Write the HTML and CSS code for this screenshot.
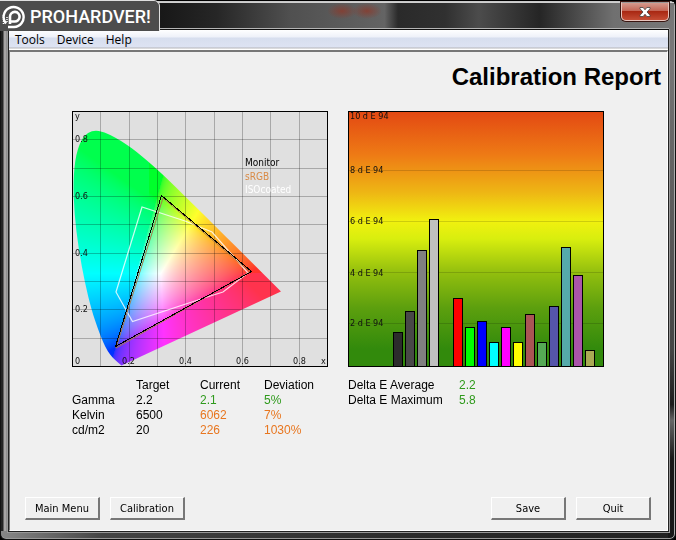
FILE: index.html
```html
<!DOCTYPE html>
<html lang="en">
<head>
<meta charset="utf-8">
<title>Calibration Report</title>
<link rel="stylesheet" href="styles.css">
</head>
<body>
<div class="window">
  <header class="titlebar">
    <button class="close" type="button" aria-label="Close">
      <svg width="12" height="10" viewBox="0 0 12 10"><path d="M1 .5h3.2L6 2.8 7.800.5H11v1.300L8 5l3 3.200v1.300H7.800L6 7.200 4.200 9.500H1V8.200L4 5 1 1.800z" fill="#fff" stroke="#444" stroke-width=".8"/></svg>
    </button>
  </header>
  <div class="client">
    <nav class="menu">
      <button type="button">Tools</button>
      <button type="button">Device</button>
      <button type="button">Help</button>
    </nav>
    <main class="content">
      <h1>Calibration Report</h1>
      <div class="panels">
        <section>
          <div class="chart">
            <canvas id="gamut" width="256" height="256"></canvas>
            <svg width="256" height="256" viewBox="0 0 256 256">
              <path class="grid" d="M28.500 0v256M57.500 0v256M85.500 0v256M113.500 0v256M142.500 0v256M170.500 0v256M198.500 0v256M227.500 0v256M0 28.500h256M0 57.500h256M0 85.500h256M0 113.500h256M0 142.500h256M0 170.500h256M0 198.500h256M0 227.500h256"/>
              <path d="M70 96L44 181L60.500 210.500L132 187L151 181L176 162L140 121L113 110Z" fill="none" stroke="#fff" stroke-opacity=".8" stroke-width="1.200"/>
              <path d="M91 87L178 161L44 237Z" fill="none" stroke="#a87a48"/>
              <path d="M89.500 84.500L179.500 160.500L43.500 235.500Z" fill="none" stroke="#000" shape-rendering="crispEdges"/>
              <g class="axis">
                <text x="3" y="8">y</text>
                <text x="3" y="31">0.8</text>
                <text x="3" y="88">0.6</text>
                <text x="3" y="145">0.4</text>
                <text x="3" y="201">0.2</text>
                <text x="3" y="253">0</text>
                <text x="50" y="253">0.2</text>
                <text x="107" y="253">0.4</text>
                <text x="164" y="253">0.6</text>
                <text x="221" y="253">0.8</text>
                <text x="249" y="253">x</text>
              </g>
              <g class="legend">
                <text x="173" y="55" fill="#000">Monitor</text>
                <text x="173" y="69" fill="#d98a45">sRGB</text>
                <text x="173" y="82" fill="#fff">ISOcoated</text>
              </g>
              <rect class="frame" x=".5" y=".5" width="255" height="255"/>
            </svg>
          </div>
          <table class="readings">
            <tr><td></td><th scope="col">Target</th><th scope="col">Current</th><th scope="col">Deviation</th></tr>
            <tr><th scope="row">Gamma</th><td>2.2</td><td class="good">2.1</td><td class="good">5%</td></tr>
            <tr><th scope="row">Kelvin</th><td>6500</td><td class="warn">6062</td><td class="warn">7%</td></tr>
            <tr><th scope="row">cd/m2</th><td>20</td><td class="warn">226</td><td class="warn">1030%</td></tr>
          </table>
        </section>
        <section>
          <div class="chart delta">
            <svg width="256" height="256" viewBox="0 0 256 256">
              <path class="grid faint" d="M0 59.500h256M0 110.500h256M0 161.500h256M0 212.500h256"/>
              <g class="axis">
                <text x="2" y="8">10 d E 94</text>
                <text x="2" y="62">8 d E 94</text>
                <text x="2" y="113">6 d E 94</text>
                <text x="2" y="165">4 d E 94</text>
                <text x="2" y="215">2 d E 94</text>
              </g>
              <g stroke="#000">
                <rect x="45.500" y="221.500" width="9" height="34" fill="#2c2c2c"/>
                <rect x="57.500" y="200.500" width="9" height="55" fill="#484848"/>
                <rect x="69.500" y="139.500" width="9" height="116" fill="#808080"/>
                <rect x="81.500" y="108.500" width="9" height="147" fill="#c0c0c0"/>
                <rect x="105.500" y="187.500" width="9" height="68" fill="#f00"/>
                <rect x="117.500" y="216.500" width="9" height="39" fill="#0f0"/>
                <rect x="129.500" y="210.500" width="9" height="45" fill="#00f"/>
                <rect x="141.500" y="231.500" width="9" height="24" fill="#0ff"/>
                <rect x="153.500" y="216.500" width="9" height="39" fill="#f0f"/>
                <rect x="165.500" y="231.500" width="9" height="24" fill="#ff0"/>
                <rect x="177.500" y="203.500" width="9" height="52" fill="#aa5555"/>
                <rect x="189.500" y="231.500" width="9" height="24" fill="#55aa55"/>
                <rect x="201.500" y="195.500" width="9" height="60" fill="#5555aa"/>
                <rect x="213.500" y="136.500" width="9" height="119" fill="#55aaaa"/>
                <rect x="225.500" y="164.500" width="9" height="91" fill="#aa55aa"/>
                <rect x="237.500" y="239.500" width="9" height="16" fill="#aaaa55"/>
              </g>
              <rect class="frame" x=".5" y=".5" width="255" height="255"/>
            </svg>
          </div>
          <table class="readings summary">
            <tr><th scope="row">Delta E Average</th><td class="good">2.2</td></tr>
            <tr><th scope="row">Delta E Maximum</th><td class="good">5.8</td></tr>
          </table>
        </section>
      </div>
      <footer class="actions">
        <button type="button">Main Menu</button>
        <button type="button">Calibration</button>
        <span class="spacer"></span>
        <button type="button">Save</button>
        <button type="button">Quit</button>
      </footer>
    </main>
  </div>
  <div class="brand">
    <svg width="24" height="24" viewBox="0 0 24 24" fill="none" stroke="#fff">
      <path d="M4 18.500A10 10 0 1 1 12 22H6" stroke-width="2.400"/>
      <path d="M8 19V11.500A4.800 4.800 0 1 1 12.500 16.500H9" stroke-width="2.600"/>
      <path d="M1.500 10v9M5 12v6" stroke-width="1.500" stroke-dasharray="1 1"/>
    </svg>
    <span>PROHARDVER!</span>
  </div>
</div>
<script src="gamut.js"></script>
</body>
</html>
```
FILE: styles.css
```css
* { box-sizing: border-box; }

body {
  margin: 0;
  background: #000;
  font-family: "Liberation Sans", Arial, sans-serif;
  font-size: 12px;
  color: #000;
}

button { font: inherit; color: inherit; }

.window {
  position: relative;
  display: flex;
  flex-direction: column;
  min-height: 100vh;
  padding: 1px 6px 7px 7px;
  background:
    linear-gradient(90deg, #222 0 2px, #a5a3a3 3px 5px, #777 6px, transparent 7px) 0 30px / 7px calc(100% - 38px) no-repeat,
    linear-gradient(180deg, #777 0, #777 60px, #6a6a6a 120px, #444 65%, #1c1c1c 75%, #666 78%, #181818 85%) 100% 0 / 7px 100% no-repeat,
    linear-gradient(90deg, #888, #444 15%, #2b2b2b 60%, #222);
  border: 1px solid #111;
  border-top-color: #000;
  border-radius: 0 6px 6px 6px;
  box-shadow: inset 0 1px #c8c8c8, inset -1px 0 #aaa, inset 0 -1px #999;
}

.titlebar {
  display: flex;
  justify-content: flex-end;
  height: 28px;
  margin: 0 -5px 0 -7px;
  padding-right: 5px;
  background:
    radial-gradient(ellipse 15px 8px, #8a3a2ccc, transparent) 327px 0 / 28px 18px no-repeat,
    radial-gradient(ellipse 15px 8px, #8a3a2ccc, transparent) 352px 0 / 28px 18px no-repeat,
    linear-gradient(90deg, #333 0, #181818 24%, #262626 32%, #505050 43%, #646464 57%, #2a2a2a 59%, #303030 66%, #4c4c4c 71%, #252525 80%, #707070 91%, #777);
  box-shadow: inset 0 1px #d0d0d0;
}

.close {
  display: grid;
  place-items: center;
  width: 48px;
  height: 19px;
  padding: 0;
  border: 1px solid #e8c4bc;
  border-top-color: #999;
  border-radius: 0 0 5px 5px;
  background: linear-gradient(#d59a8e, #c46656 45%, #a92813 50%, #c54d35);
  box-shadow: 0 0 0 1px #3a1510;
}

.client {
  flex: 1;
  display: flex;
  flex-direction: column;
  border: 1px solid #222;
  border-top: 0;
  box-shadow: 0 -1px #111, 0 -2px #b5b5b5, 0 0 0 1px #999;
  background: #f0f0f0;
}

.menu {
  display: flex;
  height: 20px;
  background: linear-gradient(#fff 0, #eef1f9 7px, #d7deee 8px, #dde3f3 17px, #b4b4b8 18px, #fff 19px);
  font-family: "Open Sans", "Segoe UI", sans-serif;
}

.menu button {
  padding: 0 6px;
  border: 0;
  background: none;
  line-height: 20px;
}

.content {
  flex: 1;
  display: flex;
  flex-direction: column;
  border: 1px solid #777;
  border-top: 2px solid #777;
  border-right-color: #fff;
  border-bottom-color: #fff;
}

h1 {
  margin: 11px 6px 20px;
  font-size: 24px;
  line-height: 28px;
  text-align: right;
}

.panels {
  display: flex;
  flex-wrap: wrap;
  justify-content: center;
  gap: 20px;
  padding-right: 1px;
}

.chart {
  display: grid;
  width: 256px;
  background: #e0e0e0;
}

.chart > * { grid-area: 1 / 1; display: block; }

.delta {
  background: linear-gradient(#e34813 0, #ee7a15 17%, #eeb714 32%, #f1f10f 43%, #d8ee0e 50%, #93bf0e 63%, #5c9f0e 77%, #328a0c 93%);
}

.grid { stroke: #000; stroke-opacity: .25; fill: none; }
.faint { stroke-opacity: .15; }
.frame { fill: none; stroke: #000; }

.axis {
  font: 9px "DejaVu Sans Condensed", "DejaVu Sans", sans-serif;
  fill: #111;
}

.legend { font: 10px "DejaVu Sans Condensed", "DejaVu Sans", sans-serif; }

.readings {
  margin-top: 11px;
  border-collapse: collapse;
  table-layout: fixed;
  width: 256px;
  line-height: 15px;
}

.readings th,
.readings td {
  height: 15px;
  padding: 0;
  font-weight: normal;
  text-align: left;
}

.summary th { width: 111px; }
.good { color: #2f9a1c; }
.warn { color: #e8761f; }

.actions {
  display: flex;
  gap: 10px;
  margin-top: auto;
  padding: 0 16px 10px 15px;
}

.spacer { flex: 1; }

.actions button {
  width: 75px;
  height: 23px;
  padding: 0;
  border: 1px solid #fff;
  border-right: 2px solid #777;
  border-bottom: 2px solid #777;
  background: #f0f0f0;
  font: 11px "DejaVu Sans Condensed", "DejaVu Sans", sans-serif;
}

.brand {
  position: absolute;
  top: -1px;
  left: -1px;
  display: flex;
  align-items: center;
  gap: 4px;
  width: 160px;
  height: 31px;
  padding: 1px 0 0 2px;
  border-top: 1px solid #e0e0e0;
  border-right: 1px solid #e0e0e0;
  border-radius: 0 6px 0 0;
  background: #4d4d4d;
  color: #fff;
  font: 500 18px Roboto, sans-serif;
}

.brand svg { flex: none; }
```
FILE: gamut.js
```js
// Spectral locus in CIE 1931 xy coordinates.
const locus = [
  [.1741, .005], [.144, .0297], [.1241, .0578], [.1096, .0868], [.0913, .1327],
  [.0687, .2007], [.0454, .295], [.0235, .4127], [.0082, .5384], [.0039, .6548],
  [.0139, .7502], [.0389, .812], [.0743, .8338], [.1142, .8262], [.1547, .8059],
  [.1929, .7816], [.2296, .7543], [.2658, .7243], [.3016, .6923], [.3373, .6589],
  [.4441, .5547], [.5125, .4866], [.627, .3725], [.7347, .2653]
];
const canvas = document.getElementById("gamut");
const ctx = canvas.getContext("2d");
const size = 256;
const scale = size / 0.9;
const image = ctx.createImageData(size, size);

for (let py = 0; py < size; py++) {
  for (let px = 0; px < size; px++) {
    const x = (px + 0.5) / scale;
    const y = (size - py - 0.5) / scale;
    const z = 1 - x - y;
    const rgb = [
      3.2406 * x - 1.5372 * y - 0.4986 * z,
      -0.9689 * x + 1.8758 * y + 0.0415 * z,
      0.0557 * x - 0.204 * y + 1.057 * z
    ];
    const peak = Math.max(...rgb);
    const floor = [0, 0.015, x < 0.27 || y < 0.33 ? 0.045 : 0.01];
    const i = (py * size + px) * 4;
    rgb.forEach((v, c) => {
      image.data[i + c] = 255 * Math.pow(Math.max(floor[c], v / peak), 1 / 2.6);
    });
    image.data[i + 3] = 255;
  }
}
ctx.putImageData(image, 0, 0);

// Clip to the locus, smoothing it through the midpoints of its segments.
const points = locus.map(([x, y]) => [x * scale, size - y * scale]);
ctx.globalCompositeOperation = "destination-in";
ctx.beginPath();
ctx.moveTo(...points[0]);
for (let i = 1; i < points.length - 1; i++) {
  const [x, y] = points[i];
  const [nx, ny] = points[i + 1];
  ctx.quadraticCurveTo(x, y, (x + nx) / 2, (y + ny) / 2);
}
ctx.lineTo(...points[points.length - 1]);
ctx.closePath();
ctx.fill();
```
